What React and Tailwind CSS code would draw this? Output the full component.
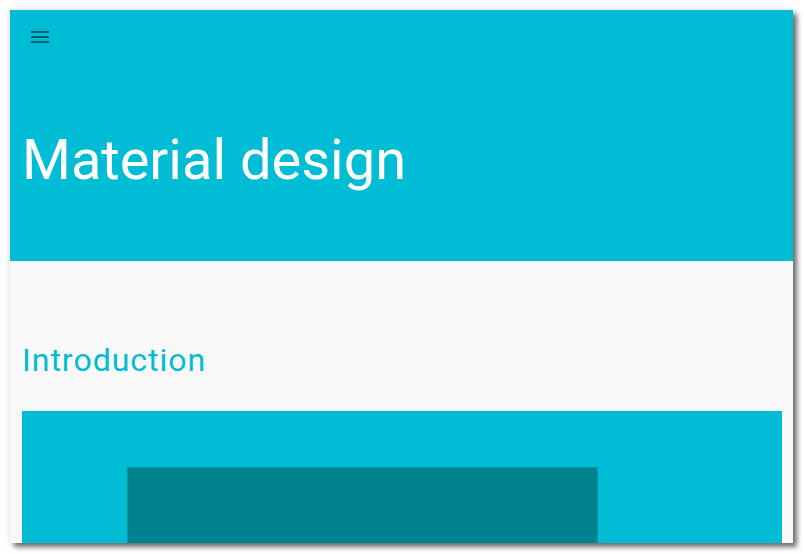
export default function App() {
  return (
    <div className="w-[804px] h-[554px] bg-white overflow-hidden pl-[10px] pt-[10px]" style={{ fontFamily: 'Roboto, "Liberation Sans", sans-serif' }}>
      <div className="w-[783px] h-[533px] overflow-hidden bg-[#f8f8f8] flex flex-col shadow-[4px_4px_5px_rgba(0,0,0,0.55),0_0_8px_rgba(0,0,0,0.12)]">
        <div className="h-[251px] shrink-0 bg-[#00bcd4] pt-[15px] pl-[18px]">
          <svg width="24" height="24" viewBox="0 0 24 24" className="block">
            <path d="M3 18h18v-2H3v2zm0-5h18v-2H3v2zm0-7v2h18V6H3z" fill="rgba(0,0,0,0.5)" />
          </svg>
          <h1 className="mt-[79px] -ml-[6px] text-[56px] leading-[64px] text-white font-normal">Material design</h1>
        </div>
        <div className="pt-[79px] pl-[12px] pr-[11px]">
          <h2 className="text-[32px] leading-[40px] tracking-[1px] text-[#00bcd4] font-normal">Introduction</h2>
          <div className="mt-[31px] h-[200px] bg-[#00bcd4] pt-[56px] pl-[105px]">
            <div className="w-[471px] h-[200px] bg-[#00838f] border border-[#0597a3]" />
          </div>
        </div>
      </div>
    </div>
  );
}
